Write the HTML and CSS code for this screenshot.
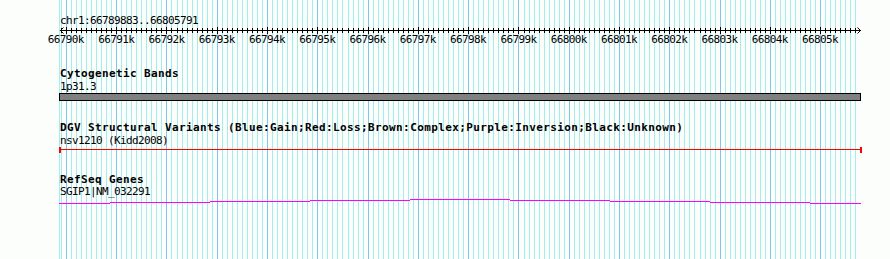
FILE: index.html
```html
<!DOCTYPE html>
<html lang="en">
<head>
    <meta charset="UTF-8">
    <meta name="viewport" content="width=device-width, initial-scale=1.0">
    <title>chr1:66789883..66805791</title>
    <link rel="stylesheet" href="styles.css">
    <script>
        // grid lines and ruler ticks, placed from the sequence coordinates
        document.addEventListener('DOMContentLoaded', function () {
            const START = 66789883;
            const END = 66805791;
            const LEFT = 60;
            const WIDTH = 800;
            const scale = WIDTH / (END - START);
            const svgNS = 'http://www.w3.org/2000/svg';
            const grid = document.getElementById('grid');
            const ticks = document.getElementById('ticks');

            function rect(parent, x, y, w, h, cls) {
                const r = document.createElementNS(svgNS, 'rect');
                r.setAttribute('x', x);
                r.setAttribute('y', y);
                r.setAttribute('width', w);
                r.setAttribute('height', h);
                r.setAttribute('class', cls);
                parent.appendChild(r);
            }

            rect(grid, 59, 0, 1, 259, 'minor');
            for (let p = Math.ceil(START / 100) * 100; p <= END; p += 100) {
                const x = Math.round(LEFT + (p - START) * scale);
                const major = p % 1000 === 0;
                rect(grid, x, 0, 1, 259, major ? 'major' : 'minor');
                rect(ticks, x, major ? 0 : 1, 1, major ? 7 : 5, 'tick');
            }
        });
    </script>
</head>
<body>
<div class="panel">
    <svg class="grid" width="890" height="259" shape-rendering="crispEdges">
        <g id="grid"></g>
    </svg>

    <div class="tracks">
        <div class="label title">chr1:66789883..66805791</div>

        <!-- ruler -->
        <svg class="glyph" width="890" height="7">
            <rect class="tick" x="60" y="3" width="801" height="1" shape-rendering="crispEdges"/>
            <g id="ticks" shape-rendering="crispEdges"></g>
            <path class="arrow" d="M63.5 0.5 L60.5 3.5 L63.5 6.5"/>
            <path class="arrow" d="M857.5 0.5 L860.5 3.5 L857.5 6.5"/>
        </svg>
        <div class="scale-labels">
            <span>66790k</span><span>66791k</span><span>66792k</span><span>66793k</span>
            <span>66794k</span><span>66795k</span><span>66796k</span><span>66797k</span>
            <span>66798k</span><span>66799k</span><span>66800k</span><span>66801k</span>
            <span>66802k</span><span>66803k</span><span>66804k</span><span>66805k</span>
        </div>

        <!-- Cytogenetic Bands -->
        <div class="label track-name first">Cytogenetic Bands</div>
        <div class="label feature-name">1p31.3</div>
        <svg class="glyph" width="890" height="8" shape-rendering="crispEdges">
            <rect class="band" x="59.5" y="0.5" width="801" height="7"/>
        </svg>

        <!-- DGV -->
        <div class="label track-name">DGV Structural Variants (Blue:Gain;Red:Loss;Brown:Complex;Purple:Inversion;Black:Unknown)</div>
        <div class="label feature-name">nsv1210 (Kidd2008)</div>
        <svg class="glyph" width="890" height="6" shape-rendering="crispEdges">
            <rect class="loss" x="59" y="2" width="803" height="1"/>
            <rect class="loss" x="59" y="0" width="2" height="6"/>
            <rect class="loss" x="860" y="0" width="2" height="6"/>
        </svg>

        <!-- RefSeq Genes -->
        <div class="label track-name">RefSeq Genes</div>
        <div class="label feature-name tight">SGIP1|NM_032291</div>
        <svg class="glyph" width="890" height="7" shape-rendering="crispEdges">
            <rect class="gene" x="59" y="5" width="51" height="1"/>
            <rect class="gene" x="110" y="4" width="100" height="1"/>
            <rect class="gene" x="210" y="3" width="100" height="1"/>
            <rect class="gene" x="310" y="2" width="100" height="1"/>
            <rect class="gene" x="410" y="1" width="100" height="1"/>
            <rect class="gene" x="510" y="2" width="100" height="1"/>
            <rect class="gene" x="610" y="3" width="100" height="1"/>
            <rect class="gene" x="710" y="4" width="100" height="1"/>
            <rect class="gene" x="810" y="5" width="51" height="1"/>
        </svg>
    </div>
</div>
</body>
</html>
```

FILE: styles.css
```css
body {
    margin: 0;
    background-color: #fcfefc;
}

.panel {
    position: relative;
    width: 890px;
    height: 259px;
    overflow: hidden;
    font-family: "DejaVu Sans Mono", "Liberation Mono", monospace;
    font-size: 11px;
    letter-spacing: -0.62px;
    color: #000;
}

.grid {
    position: absolute;
    left: 0;
    top: 0;
}

.minor {
    fill: #a6ecec;
}

.major {
    fill: #82c6ee;
}

.tracks {
    position: relative;
}

.glyph {
    display: block;
}

.tick {
    fill: #000;
}

.arrow {
    fill: none;
    stroke: #000;
    stroke-width: 1;
}

.label {
    padding-left: 60px;
    line-height: 12px;
    white-space: pre;
}

.title {
    padding-top: 15px;
}

.scale-labels {
    display: flex;
    padding-left: 40.74px;
    line-height: 12px;
}

.scale-labels span {
    flex: 0 0 50.289px;
    text-align: center;
}

.track-name {
    margin-top: 21px;
    font-weight: bold;
    letter-spacing: 0.38px;
}

.track-name.first {
    margin-top: 22px;
}

.feature-name {
    margin-top: 1px;
}

.feature-name.tight {
    margin-top: 0;
}

.band {
    fill: #808080;
    stroke: #000;
}

.loss {
    fill: #ff0000;
}

.gene {
    fill: #ff00ff;
}
```
